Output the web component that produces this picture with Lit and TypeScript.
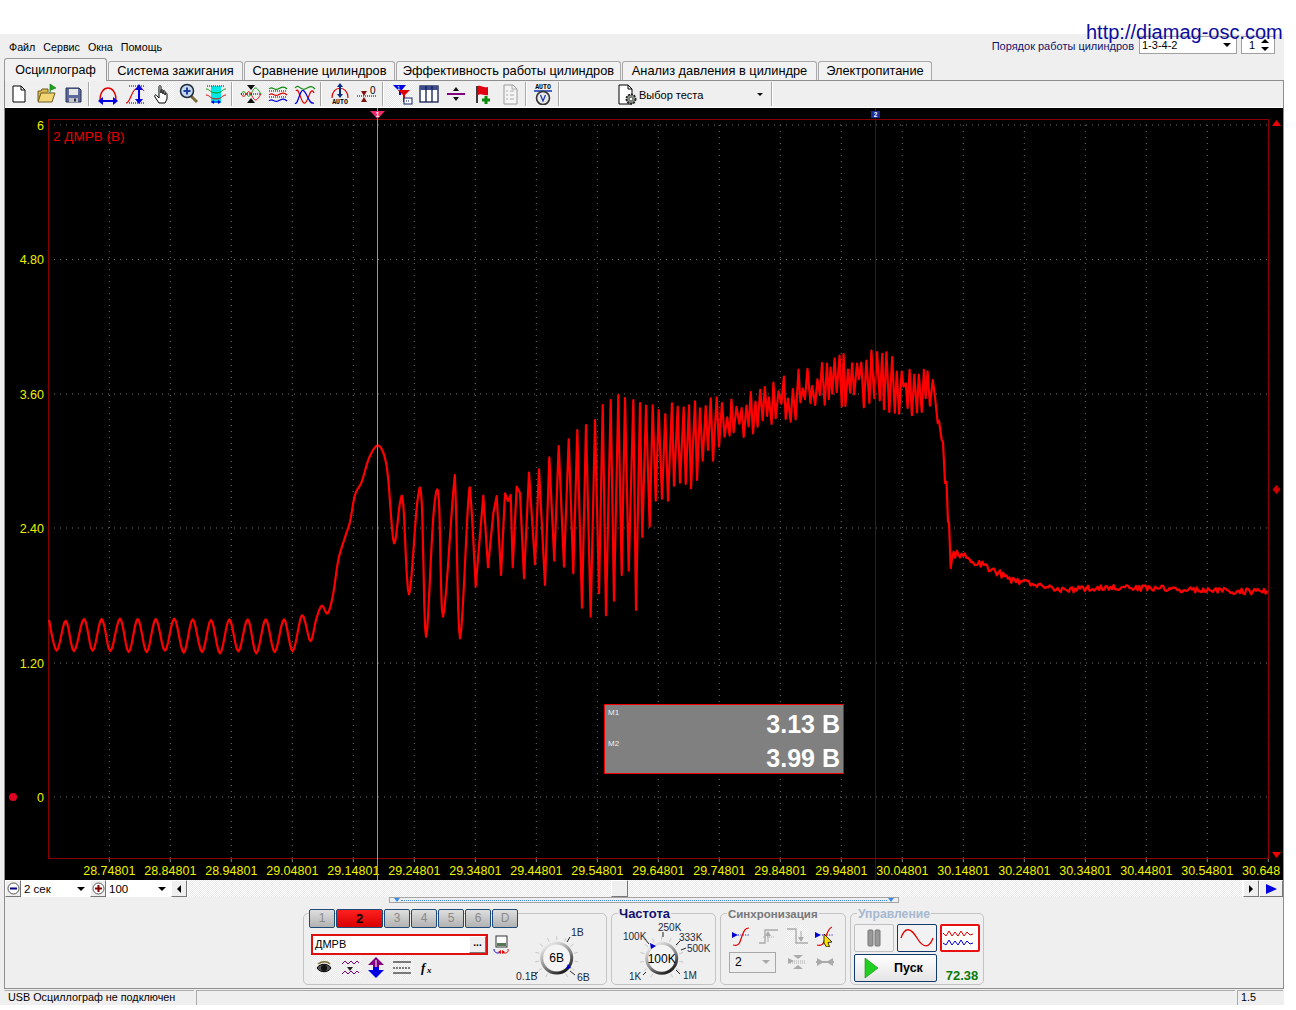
import { LitElement, html, svg, css } from "lit";
import { customElement } from "lit/decorators.js";

// --- waveform data, in page pixels ---
const idle = [[49,620],[56.7,650.7],[65.7,620.7],[74,651],[84,619],[92.7,650.7],[101.7,619],[110.3,651],[120,618.7],[128.7,652],[137.7,619],[146.7,652],[155.7,619],[165,650.7],[174.3,618.7],[183.7,652.7],[192.7,619.3],[202,652],[211,620],[220,653.3],[229.3,619.3],[238.3,651.3],[247.7,619.3],[256.3,653.3],[265.7,619.3],[274.7,652],[284,619.3],[292.7,651.3],[302,615.3],[310.3,641],[316,620],[321.7,605.7],[327.7,613.3]];
const riseSmooth = [[333.3,593.3],[338.3,560],[345,537.3],[350,521.7],[355,495],[361.7,481.7],[368.3,460],[375,447.3],[380,446.7],[385,458.3],[388.3,480],[394,543.3],[400,502.7],[403.3,505],[409,594.3],[417.3,501.7],[421.7,501.7],[426,636.7],[433.3,516.7],[438.7,496.7],[443,616.7],[453.3,491.7],[455.5,492.5],[460,638.3],[468.3,500.7],[471,501.7],[475.7,586.7]];
const rise = [[483.3,495.7],[488,567.3],[493.3,513.3],[496.7,496],[501,575],[505,493.3],[508,501],[510.7,495],[512.7,567.3],[516.7,486.7],[520,493],[524,578.3],[529,472.7],[535,564.3],[539,469.3],[545,585],[549.3,457.3],[554.3,560.7],[558.7,446],[564,566.7],[568.7,439.3],[573.3,573.3],[577.3,430],[582,607.7],[586,425],[590.7,616.7],[595,420],[599,593.3],[602.7,405],[606,615.3],[610.7,400],[614,600.7],[618.3,395],[621.7,575],[625,398],[628.7,570.7],[633.3,400],[636,610],[640,403],[642.3,537],[646,405.7],[649.7,526.7],[652.7,405.3],[655.7,500.7],[658.7,410],[662,498.7],[665.3,414],[668,500.7],[672,403.3],[674,485.7],[677.7,406.7],[680,482.7],[683.7,407.3],[685.7,484],[689,405.3],[691,488.3],[695,401.3],[697,480],[700,408.3],[702.7,460.7],[705.7,406],[708,450],[710.7,398.3],[713,460.7],[716.7,397.3],[719,446.7]];
const fall = [[935,397],[937.7,423],[939,421],[941.7,440],[943,442],[945,483],[946.5,482],[948,522],[949,522],[950.7,568]];
const upperEnv = [[720,404],[760,386],[800,369],[840,354],[870,349],[900,355],[933,374]];
const lowerEnv = [[720,448],[760,432],[790,424],[820,408],[850,406],[880,410],[910,416],[933,408]];
const tailBase = [[952,555],[960,554],[975,562],[990,568],[1010,580],[1030,583],[1060,590],[1100,588],[1150,588],[1200,590],[1268,592]];

function lerp(tbl: number[][], x: number) {
  for (let i = 1; i < tbl.length; i++) {
    if (x <= tbl[i][0]) {
      const t = (x - tbl[i - 1][0]) / (tbl[i][0] - tbl[i - 1][0]);
      return tbl[i - 1][1] + t * (tbl[i][1] - tbl[i - 1][1]);
    }
  }
  return tbl[tbl.length - 1][1];
}

// catmull-rom, so the slow part of the signal comes out round and not as a zigzag
function smooth(src: number[][]) {
  const out: number[][] = [];
  for (let i = 0; i < src.length - 1; i++) {
    const a = src[Math.max(i - 1, 0)], b = src[i], c = src[i + 1], d = src[Math.min(i + 2, src.length - 1)];
    for (let s = 0; s < 6; s++) {
      const t = s / 6, t2 = t * t, t3 = t2 * t;
      out.push([0, 1].map((k) =>
        0.5 * (2 * b[k] + (c[k] - a[k]) * t + (2 * a[k] - 5 * b[k] + 4 * c[k] - d[k]) * t2 + (3 * b[k] - a[k] - 3 * c[k] + d[k]) * t3)));
    }
  }
  out.push(src[src.length - 1]);
  return out;
}

function buildTrace() {
  let seed = 4711;
  const rnd = () => {
    seed = (seed * 16807) % 2147483647;
    return seed / 2147483647;
  };
  const pts = [...smooth([...idle, ...riseSmooth]), ...rise];
  let up = true;
  for (let x = 722; x < 934; x += 1.7 + rnd() * 1.3) {
    const hi = lerp(upperEnv, x);
    const lo = lerp(lowerEnv, x);
    const mid = (hi + lo) / 2;
    const f = rnd();
    pts.push([x, up ? hi + f * f * (mid - hi) : lo - f * f * (lo - mid)]);
    up = !up;
  }
  pts.push(...fall);
  for (let x = 952; x <= 1268; x += 1.6) {
    const amp = x < 1010 ? 4 : 3;
    pts.push([x, lerp(tailBase, x) + (rnd() - 0.5) * amp * 2]);
  }
  return pts.map((p) => p[0].toFixed(1) + "," + p[1].toFixed(1)).join(" ");
}

const trace = buildTrace();
const yAxis = [["6", 125], ["4.80", 259.5], ["3.60", 394], ["2.40", 528], ["1.20", 663], ["0", 797]] as [string, number][];
const xAxis = Array.from({ length: 20 }, (_, i) => ({ x: 109.3 + 61 * i, t: (28.74801 + i * 0.1).toFixed(5) }));

// --- icons ---
const ic = (body: unknown, w = 22, h = 22) =>
  html`<svg width=${w} height=${h} viewBox="0 0 ${w} ${h}" fill="none">${body}</svg>`;

const toolIcons = {
  doc: svg`<path d="M5 3h8l4 4v12H5z" fill="#fff" stroke="#000"/><path d="M13 3v4h4" stroke="#000"/>`,
  open: svg`<path d="M3 18V8h3l1-2h6v3" fill="#d8b850" stroke="#6b5a20"/><path d="M3 19l3-9h14l-3 9z" fill="#f2d676" stroke="#6b5a20"/><path d="M15 10V1l6 4-5 2" fill="#1fa31f" stroke="#0c6d0c" stroke-width=".6"/>`,
  save: svg`<path d="M4 5h13l2 2v12H4z" fill="#5c6b9c" stroke="#2b3050"/><rect x="7" y="6" width="9" height="6" fill="#e8e8e8"/><rect x="7" y="15" width="9" height="4" fill="#c4c4c4"/><rect x="12" y="15.500" width="2" height="3" fill="#2b3050"/>`,
  archW: svg`<path d="M3 17C3 1 19 1 19 17" stroke="#e00000" stroke-width="1.300"/><path d="M4 18h14" stroke="#0000e0" stroke-width="2"/><path d="M1 18l5-4v8zM21 18l-5-4v8z" fill="#0000e0"/>`,
  archH: svg`<path d="M2 20c5 0 5-15 12-15" stroke="#e00000" stroke-width="1.200"/><path d="M14 5c3 0 5 1 6 3" stroke="#e00000"/><path d="M5 3h16M5 20h16" stroke="#000" stroke-dasharray="1 1"/><path d="M15 6v12" stroke="#0000e0" stroke-width="2"/><path d="M15 1l-4 6h8zM15 21l-4-5h8z" fill="#0000e0"/>`,
  hand: svg`<path d="M8 20l-4-6c-1-2 1-3 2-1l2 2V4c0-2 2-2 2 0v6-2c0-2 2-2 2 0v3-2c0-2 2-2 2 0v3-1c0-2 2-1 2 0v5l-2 4z" fill="#fff" stroke="#000"/>`,
  zoom: svg`<path d="M13 13l6 6" stroke="#7d6a3a" stroke-width="3"/><circle cx="9" cy="8" r="6.500" fill="#c5d8ee" stroke="#1e2a3a" stroke-width="1.500"/><path d="M5.500 8h7M9 4.500v7" stroke="#1c3d9c" stroke-width="2"/>`,
  band: svg`<rect x="6" y="3" width="10" height="17" fill="#00e8e8"/><path d="M2 3h18" stroke="#000" stroke-dasharray="1 1"/><path d="M1 6c4 0 4 4 10 4s6-4 10-4" stroke="#0a9a0a"/><path d="M1 12c4 0 4 4 10 4s6-4 10-4" stroke="#e00000"/><path d="M7 19h8" stroke="#0000e0"/><path d="M6 19l3-2v4zM16 19l-3-2v4z" fill="#0000e0"/>`,
  cross: svg`<path d="M1 11c5-8 6 8 10 0s5-8 10 0" stroke="#0a9a0a"/><path d="M1 11c5 8 6-8 10 0s5 8 10 0" stroke="#e00000"/><path d="M11 7l-4-5h8zM11 15l-4 5h8z" fill="#111"/><path d="M1 11h20" stroke="#000" stroke-dasharray="1 1"/>`,
  rows: svg`<path d="M2 6c3-4 5 2 9 0s6-3 9 0" stroke="#0a8a0a" stroke-width="1.200"/><path d="M2 12c3-4 5 2 9 0s6-3 9 0" stroke="#e00000" stroke-width="1.200"/><path d="M2 18c3-4 5 2 9 0s6-3 9 0" stroke="#0000e0" stroke-width="1.200"/><path d="M2 8h18M2 14h18" stroke="#000" stroke-dasharray="1 1"/>`,
  over: svg`<path d="M1 5c4-5 5 3 10 1s6-4 10 0" stroke="#0a8a0a" stroke-width="1.200"/><path d="M2 8c3-5 5 14 9 12s5-18 9-10" stroke="#e00000" stroke-width="1.200"/><path d="M1 20c3 3 5-16 9-12s5 14 10 12" stroke="#0000e0" stroke-width="1.200"/>`,
  autoH: svg`<path d="M3 15C3 2 19 2 19 15" stroke="#e00000" stroke-width="1.200"/><path d="M11 3v10" stroke="#0a2a8a" stroke-width="2"/><path d="M11 0l-3 4h6zM11 15l-3-4h6z" fill="#0a2a8a"/><text x="11" y="21" text-anchor="middle" font-size="6.500" font-weight="700" font-family="Liberation Mono, monospace" fill="#000">AUTO</text>`,
  zero: svg`<path d="M5 8h6l-3 5zM5 19h6l-3-5z" fill="#7d1010"/><path d="M1 13h20" stroke="#000" stroke-dasharray="1 1"/><text x="14" y="11" font-size="10" font-family="Liberation Sans, sans-serif" fill="#000">0</text>`,
  filter: svg`<path d="M2 2h13l-5 6v4H8V8z" fill="#0000e0"/><path d="M7 7h12l-5 5v7h-2v-7z" fill="#e00000"/><text x="6" y="7" font-size="6" fill="#fff" font-family="Liberation Sans, sans-serif">1</text><rect x="13" y="15" width="8" height="6" fill="#fff" stroke="#12206a"/><path d="M15 18h4" stroke="#12206a" stroke-dasharray="1 1"/>`,
  table: svg`<rect x="2" y="3" width="18" height="16" fill="#fff" stroke="#101c50" stroke-width="1.300"/><rect x="2" y="3" width="18" height="4" fill="#3c4c90"/><path d="M8 3v16M14 3v16" stroke="#101c50" stroke-width="1.300"/>`,
  split: svg`<path d="M2 11h18" stroke="#800080" stroke-width="2"/><path d="M11 4l-3 4h6zM11 18l-3-4h6z" fill="#111"/>`,
  flag: svg`<path d="M5 3v17" stroke="#000" stroke-width="1.500"/><path d="M6 3c3-1 5 2 10 1v8c-4 1-7-2-10 0z" fill="#e00010"/><path d="M14 13v8M10 17h8" stroke="#0a8a0a" stroke-width="3"/>`,
  check: svg`<path d="M5 2h9l4 4v15H5z" fill="#f4f4f4" stroke="#999"/><path d="M13 2v4h5M7 8h2M7 12h2M7 16h2M11 8h4M11 12h4M11 16h4" stroke="#aaa"/>`,
  gauge: svg`<text x="11" y="6" text-anchor="middle" font-size="6.500" font-weight="700" font-family="Liberation Mono, monospace" fill="#000">AUTO</text><path d="M2 8h18" stroke="#1030b0" stroke-width="1.500"/><circle cx="11" cy="15" r="6.500" fill="#e8e8e8" stroke="#333" stroke-width="1.600"/><path d="M8.500 12l2.500 6 2.500-6" stroke="#1030b0" stroke-width="1.200"/>`,
  test: svg`<path d="M3 2h9l4 4v15H3z" fill="#fff" stroke="#000"/><path d="M12 2v4h4" stroke="#000"/><circle cx="15" cy="16" r="4.600" fill="#8a9488" stroke="#222" stroke-width="1.800" stroke-dasharray="2 1"/><circle cx="15" cy="16" r="1.800" fill="#fff" stroke="#333" stroke-width=".6"/>`,
};

const syncUp = svg`<path d="M1 18h6V5h13" stroke="#aaa" stroke-width="1.400"/><path d="M10 8v9" stroke="#aaa"/><path d="M10 6l-3 5h6z" fill="#aaa"/><path d="M5 12h11" stroke="#aaa" stroke-dasharray="1 1"/>`;
const syncDown = svg`<path d="M1 4h9v14h12" stroke="#aaa" stroke-width="1.400"/><path d="M15 6v8" stroke="#aaa"/><path d="M15 17l-3-5h6z" fill="#aaa"/>`;
const syncRise = svg`<path d="M2 7l6 3-6 3z" fill="#0000d0"/><path d="M8 10h12" stroke="#0000d0" stroke-dasharray="1 1.400"/><path d="M3 20c7 2 7-4 9-9s3-8 7-8" stroke="#e00000" stroke-width="1.200"/>`;
const syncCursor = svg`<path d="M1 7l6 3-6 3z" fill="#0000d0"/><path d="M8 10h12" stroke="#0000d0" stroke-dasharray="1 1.400"/><path d="M3 20c7 2 7-4 9-9s3-8 6-9" stroke="#e00000" stroke-width="1.200"/><path d="M10 9l8 8-4 .5 1.500 4-3 .5-2.500-4z" fill="#ffe000" stroke="#000" stroke-width=".8"/>`;
const syncA = svg`<path d="M2 7l6 3-6 3z" fill="#aaa"/><path d="M7 4h10l-5 4zM7 18h10l-5-4z" fill="#aaa"/><path d="M4 10h16M4 12h16" stroke="#aaa" stroke-dasharray="1 1"/>`;
const syncB = svg`<path d="M2 11h18" stroke="#aaa" stroke-width="2"/><path d="M3 7l7 4-7 4zM19 7l-7 4 7 4z" fill="#aaa"/>`;

function ticks(cx: number, cy: number, from: number, to: number, n: number, r1: number, r2: number) {
  return Array.from({ length: n }, (_, i) => {
    const a = ((from + ((to - from) * i) / (n - 1)) * Math.PI) / 180;
    return svg`<line x1=${cx + r1 * Math.cos(a)} y1=${cy + r1 * Math.sin(a)} x2=${cx + r2 * Math.cos(a)} y2=${cy + r2 * Math.sin(a)} stroke="#c8c8c8"/>`;
  });
}

const knobRing = (id: string, cx: number, cy: number) => svg`
  <defs><linearGradient id=${id} x1="0.2" y1="0" x2="0.8" y2="1"><stop offset="0" stop-color="#f0f0f0"/><stop offset="0.55" stop-color="#888"/><stop offset="1" stop-color="#111"/></linearGradient></defs>
  <circle cx=${cx} cy=${cy} r="15" fill="#f4f4f4" stroke="url(#${id})" stroke-width="3"/>`;

const blackTick = (x1: number, y1: number, x2: number, y2: number) => svg`<line x1=${x1} y1=${y1} x2=${x2} y2=${y2} stroke="#222"/>`;

const tabs = ["Осциллограф", "Система зажигания", "Сравнение цилиндров", "Эффективность работы цилиндров", "Анализ давления в цилиндре", "Электропитание"];
const channels = ["1", "2", "3", "4", "5", "6", "D"];

@customElement("app-root")
export class AppRoot extends LitElement {
  static styles = css`
    :host { display: block; position: relative; width: 1296px; height: 1010px; background: #fff; overflow: hidden; font-family: "Liberation Sans", Arial, sans-serif; color: #000; }
    svg { display: block; }
    .link { position: absolute; left: 1086px; top: 20px; font-size: 20px; line-height: 24px; color: #0b0b9c; white-space: nowrap; z-index: 3; }
    .win { position: absolute; left: 0; top: 34px; width: 1284px; height: 971px; background: #efefef; display: flex; flex-direction: column; }
    .menu { height: 24px; display: flex; align-items: center; padding: 2px 0 0 9px; box-sizing: border-box; font-size: 10.7px; gap: 8px; position: relative; }
    .order { margin-left: auto; margin-right: 9px; display: flex; align-items: center; gap: 4px; height: 24px; margin-top: -4px; }
    .order span { color: #13136a; font-size: 11px; margin: 2px 1px 0 0; }
    .mini { height: 18px; box-sizing: border-box; border: 1px solid #a0a0a0; background: #fff; font-size: 11px; line-height: 14px; padding-left: 2px; position: relative; display: flex; justify-content: space-between; align-items: center; padding-right: 5px; }
    .order-sel { width: 98px; }
    .order-spin { width: 34px; padding-left: 7px; }
    .caret { width: 0; height: 0; border: 4px solid transparent; border-top: 4px solid #000; border-bottom: 0; }
    .spin { display: flex; flex-direction: column; gap: 4px; }
    .spin i { display: block; width: 0; height: 0; border: 4px solid transparent; border-bottom: 4px solid #000; border-top: 0; }
    .spin i + i { border-top: 4px solid #000; border-bottom: 0; }
    .tabs { height: 22px; display: grid; grid-template-columns: 103px 135px 151px 225px 195px 114px; column-gap: 1px; margin-left: 4px; align-items: end; position: relative; z-index: 1; }
    .tab { height: 19px; box-sizing: border-box; border: 1px solid #a8a8a8; border-bottom: 0; border-radius: 3px 3px 0 0; background: #f2f2f2; font-size: 12.8px; line-height: 17px; text-align: center; white-space: nowrap; }
    .tab.on { height: 23px; border-color: #999; font-size: 12.5px; line-height: 22px; margin-bottom: -1px; background: #f2f2f2; }
    .panel { width: 1280px; box-sizing: border-box; height: 909px; margin-left: 4px; border: 1px solid #8e8e8e; display: flex; flex-direction: column; }
    .toolbar { height: 26px; display: flex; align-items: center; border-bottom: 1px solid #fff; }
    .tb { width: 27px; height: 25px; display: flex; align-items: center; justify-content: center; flex: none; }
    .on-check { background: repeating-conic-gradient(#e6e6e6 0 25%, #fdfdfd 0 50%) 0 0 / 2px 2px; }
    .sep { width: 2px; height: 24px; margin: 0 4px 0 2px; flex: none; border-left: 1px solid #a8a8a8; border-right: 1px solid #fff; box-sizing: border-box; }
    .sep.tight { margin-right: 2px; }
    .test { width: 205px; display: flex; align-items: center; padding-left: 52px; box-sizing: border-box; font-size: 11px; gap: 1px; height: 24px; flex: none; }
    .test span { margin-top: 2px; }
    .test .caret { margin-left: auto; margin-right: 6px; border-width: 3px; border-top-width: 3px; }
    .chart { height: 772px; background: #000; position: relative; flex: none; }
    .readout { position: absolute; left: 599px; top: 596px; width: 240px; height: 70px; box-sizing: border-box; border: 1px solid #f00000; background: #808080; color: #fff; display: grid; grid-template-columns: 1fr auto; grid-template-rows: 34px 34px; padding: 2px 3px 0 0; font-weight: 700; }
    .readout small { font-size: 8px; font-weight: 400; padding-left: 3px; line-height: 11px; color: #e8f0f8; }
    .readout small.m2 { margin-top: -3px; }
    .readout b { font-size: 25px; line-height: 34px; white-space: nowrap; }
    .timerow { height: 17px; display: flex; align-items: stretch; background: #fff; flex: none; font-size: 11.5px; }
    .rbtn { width: 16px; box-sizing: border-box; border: 1px solid; border-color: #fff #777 #777 #fff; background: #efefef; display: flex; align-items: center; justify-content: center; flex: none; }
    .tsel { display: flex; align-items: center; justify-content: space-between; padding: 0 5px 0 3px; box-sizing: border-box; flex: none; }
    .track { flex: 1; position: relative; background: repeating-conic-gradient(#e9e9e9 0 25%, #fff 0 50%) 0 0 / 2px 2px; margin: 0 1px; }
    .thumb { position: absolute; left: 423px; top: 0; width: 17px; height: 17px; box-sizing: border-box; border: 1px solid; border-color: #fff #777 #777 #fff; background: #efefef; }
    .arrow-l { width: 0; height: 0; border: 4px solid transparent; border-right: 4px solid #000; border-left: 0; }
    .arrow-r { width: 0; height: 0; border: 4px solid transparent; border-left: 4px solid #000; border-right: 0; }
    .arrow-b { width: 0; height: 0; border: 5px solid transparent; border-left: 11px solid #0000e0; border-right: 0; }
    .range { height: 6px; width: 510px; margin-left: 384px; box-sizing: border-box; border: 1px solid #a4a4a4; border-top-width: 1px; display: flex; align-items: center; padding: 0 4px; gap: 1px; flex: none; }
    .range i { flex: 1; border-top: 1px dotted #3b8be8; }
    .range u { width: 0; height: 0; border: 3px solid transparent; border-top: 4px solid #3b8be8; border-bottom: 0; }
    .groups { display: flex; gap: 4px; margin: 10px 0 0 298px; height: 72px; flex: none; }
    .grp { box-sizing: border-box; height: 72px; border: 1px solid #c4c4c4; border-radius: 5px; position: relative; flex: none; }
    .title { position: absolute; top: -6px; left: 6px; background: #efefef; font-size: 11.5px; font-weight: 700; line-height: 12px; padding: 0 1px; z-index: 1; white-space: nowrap; }
    .g1 { width: 304px; display: flex; }
    .g1col { width: 203px; margin-left: 5px; flex: none; }
    .chs { display: flex; gap: 1px; margin-top: -5px; height: 19px; }
    .ch { width: 26px; flex: none; box-sizing: border-box; border: 1px solid #1d4a78; border-radius: 2px; background: linear-gradient(#dedede, #b2b2b2); color: #8a8a8a; font-size: 12px; line-height: 17px; text-align: center; }
    .ch.on { width: 47px; background: linear-gradient(#ff2020, #d80000); color: #000; font-weight: 700; font-size: 13px; }
    .field { margin: 6px 0 0 2px; display: flex; align-items: center; gap: 4px; }
    .input { width: 177px; height: 21px; flex: none; box-sizing: border-box; border: 2px solid #e01010; background: #fff; font-size: 11px; line-height: 17px; padding-left: 2px; display: flex; justify-content: space-between; }
    .dots { width: 17px; height: 17px; box-sizing: border-box; border: 1px solid; border-color: #fff #777 #777 #fff; background: #efefef; font-size: 10px; font-weight: 700; line-height: 11px; text-align: center; }
    .tools { display: flex; margin: 1px 0 0 3px; height: 23px; align-items: center; gap: 2px; }
    .t { width: 24px; height: 23px; display: flex; align-items: center; justify-content: center; flex: none; }
    .g2 { width: 105px; }
    .g2 .title { font-size: 13px; color: #12126e; }
    .g3 { width: 126px; }
    .g3 .title { color: #777; left: 6px; }
    .synch { display: grid; grid-template-columns: 28px 28px 28px 28px; grid-auto-rows: 26px; align-items: center; justify-items: center; margin: 9px 0 0 6px; }
    .ssel { grid-column: span 2; justify-self: start; margin-left: 2px; width: 47px; height: 21px; box-sizing: border-box; border: 1px solid #a8a8a8; display: flex; justify-content: space-between; align-items: center; font-size: 12px; padding: 0 5px; }
    .ssel .caret { border-top-color: #aaa; }
    .g4 { width: 134px; display: grid; grid-template-columns: 40px 40px 40px; grid-template-rows: 28px 28px; column-gap: 3px; row-gap: 2px; padding: 10px 0 0 3px; }
    .g4 .title { color: #a6b8d0; font-size: 12.2px; }
    .cbtn { box-sizing: border-box; border: 1px solid #123a6a; border-radius: 2px; background: #f2f2f2; display: flex; align-items: center; justify-content: center; }
    .cbtn.off { border-color: #c0c0c0; }
    .cbtn.red { border: 2px solid #e81010; background: #fff; }
    .go { grid-column: span 2; display: flex; align-items: center; padding-left: 9px; gap: 15px; font-size: 12.5px; font-weight: 700; justify-content: flex-start; background: linear-gradient(#fff, #e4e4e4); }
    .rate { align-self: end; text-align: center; font-size: 13px; font-weight: 700; color: #0a7a0a; padding-left: 4px; margin-bottom: -2px; line-height: 16px; }
    .status { height: 15px; margin-top: 1px; display: grid; grid-template-columns: 190px 1039px 46px; column-gap: 2px; margin-left: 4px; font-size: 10.8px; flex: none; }
    .status div { border-left: 1px solid #aaa; border-top: 1px solid #aaa; padding-left: 3px; box-sizing: border-box; line-height: 13px; }
    .status div:first-child { border-left-color: #efefef; }
  `;

  chart() {
    return html`<svg width="1278" height="772" viewBox="5 108 1278 772" font-family="Liberation Sans, Arial, sans-serif">
      ${yAxis.map(([, y]) => svg`<line x1="48" x2="1268" y1=${y} y2=${y} stroke="#707070" stroke-dasharray="1 5"/>`)}
      ${xAxis.map((t) => svg`<line x1=${t.x} x2=${t.x} y1="119" y2="858" stroke="#707070" stroke-dasharray="1 5"/>
        <line x1=${t.x} x2=${t.x} y1="858" y2="862" stroke="#888"/>`)}
      <rect x="48.500" y="119.500" width="1220" height="739" stroke="#8a0000" fill="none"/>
      ${yAxis.map(([l, y]) => svg`<text x="44" y=${y + 4.5} text-anchor="end" font-size="12.500" fill="#ecf000">${l}</text>`)}
      ${xAxis.slice(0, 19).map((t) => svg`<text x=${t.x} y="875" text-anchor="middle" font-size="12.500" fill="#f0f400">${t.t}</text>`)}
      <text x="1242" y="875" font-size="12.500" fill="#f0f400">30.648</text>
      <text x="53" y="141" font-size="13.500" fill="#e80000">2 ДМРВ (В)</text>
      <line x1="875.500" x2="875.500" y1="108" y2="880" stroke="#1a1a60"/>
      <polyline points=${trace} fill="none" stroke="#ff0000" stroke-width="2.200" stroke-linejoin="round"/>
      <line x1="875.500" x2="875.500" y1="350" y2="410" stroke="#1010e0"/>
      <line x1="377.500" x2="377.500" y1="108" y2="880" stroke="#b08a98"/>
      <path d="M370 111h15l-7.500 8z" fill="#f02a6a"/>
      <text x="377.500" y="117" text-anchor="middle" font-size="6.500" font-weight="700" fill="#fff">1</text>
      <rect x="871" y="111" width="9" height="7" fill="#1a2a9a"/>
      <text x="875.500" y="117" text-anchor="middle" font-size="6.500" font-weight="700" fill="#fff">2</text>
      <path d="M1272 126l4.500-6 4.500 6z" fill="#f00000"/>
      <path d="M1276.500 485l4 4.500-4 4.500-4-4.500z" fill="#d00000"/>
      <path d="M1272 852l4.500 6 4.500-6z" fill="#f00000"/>
      <circle cx="13" cy="797" r="4" fill="#e00020"/>
    </svg>`;
  }

  knobV() {
    return html`<svg width="90" height="70" viewBox="513 914 90 70" font-family="Liberation Sans, Arial, sans-serif" font-size="10.500" fill="#1c2a40">
      ${ticks(557.7, 958, 120, 420, 13, 18, 22)}
      ${blackTick(568, 942, 571, 937)}${blackTick(536, 974, 539, 972)}${blackTick(571, 971, 576, 975)}
      ${knobRing("kv", 557.7, 958)}
      <text x="557.700" y="962" text-anchor="middle" font-size="12" fill="#000">6В</text>
      <text x="572" y="936">1В</text><text x="517" y="980">0.1В</text><text x="578" y="981">6В</text>
      <path d="M567 969l2-5 3 4z" fill="#0000d0"/>
    </svg>`;
  }

  knobF() {
    return html`<svg width="103" height="70" viewBox="612 914 103 70" font-family="Liberation Sans, Arial, sans-serif" font-size="10" fill="#1c2a40">
      ${ticks(661.7, 958.3, 120, 420, 13, 18, 22)}
      ${blackTick(645, 939, 649, 944)}${blackTick(663, 932, 663, 937)}${blackTick(680, 941, 676, 945)}${blackTick(681, 950, 686, 948)}${blackTick(646, 972, 643, 975)}${blackTick(676, 970, 680, 974)}
      ${knobRing("kf", 661.7, 958.3)}
      <text x="661.700" y="963" text-anchor="middle" font-size="12" fill="#000">100K</text>
      <text x="658" y="931">250K</text><text x="623" y="940">100K</text><text x="679" y="941">333K</text><text x="687" y="952">500K</text><text x="629" y="980">1K</text><text x="683" y="979">1M</text>
      <path d="M650 943l6 3-5 3z" fill="#0000d0"/>
    </svg>`;
  }

  render() {
    const tb = (k: keyof typeof toolIcons, on = false) =>
      html`<div class="tb ${on ? "on-check" : ""}">${ic(toolIcons[k])}</div>`;
    return html`
      <div class="link">http://diamag-osc.com</div>
      <div class="win">
        <div class="menu">
          <span>Файл</span><span>Сервис</span><span>Окна</span><span>Помощь</span>
          <div class="order">
            <span>Порядок работы цилиндров</span>
            <div class="mini order-sel">1-3-4-2<i class="caret"></i></div>
            <div class="mini order-spin">1<div class="spin"><i></i><i></i></div></div>
          </div>
        </div>
        <div class="tabs">
          ${tabs.map((t, i) => html`<div class="tab ${i === 0 ? "on" : ""}">${t}</div>`)}
        </div>
        <div class="panel">
          <div class="toolbar">
            ${tb("doc")}${tb("open")}${tb("save")}<div class="sep"></div>
            ${tb("archW")}${tb("archH")}${tb("hand", true)}${tb("zoom")}${tb("band")}<div class="sep"></div>
            ${tb("cross")}${tb("rows", true)}${tb("over")}<div class="sep"></div>
            ${tb("autoH")}${tb("zero")}<div class="sep"></div>
            ${tb("filter", true)}${tb("table")}${tb("split")}${tb("flag")}${tb("check")}<div class="sep tight"></div>
            ${tb("gauge")}<div class="sep"></div>
            <div class="test">${ic(toolIcons.test)}<span>Выбор теста</span><i class="caret"></i></div>
            <div class="sep"></div>
          </div>
          <div class="chart">
            ${this.chart()}
            <div class="readout">
              <small>M1</small><b>3.13 В</b>
              <small class="m2">M2</small><b>3.99 В</b>
            </div>
          </div>
          <div class="timerow">
            <div class="rbtn">${ic(svg`<circle cx="6.500" cy="6.500" r="5.500" stroke="#555" fill="#fff"/><path d="M3 6.500h7" stroke="#000080" stroke-width="2"/>`, 13, 13)}</div>
            <div class="tsel" style="width:69px">2 сек<i class="caret"></i></div>
            <div class="rbtn">${ic(svg`<circle cx="6.500" cy="6.500" r="5.500" stroke="#555" fill="#fff"/><path d="M3 6.500h7M6.500 3v7" stroke="#800000" stroke-width="2"/>`, 13, 13)}</div>
            <div class="tsel" style="width:65px">100<i class="caret"></i></div>
            <div class="rbtn"><i class="arrow-l"></i></div>
            <div class="track"><div class="thumb"></div></div>
            <div class="rbtn"><i class="arrow-r"></i></div>
            <div class="rbtn" style="width:24px"><i class="arrow-b"></i></div>
          </div>
          <div class="range"><u></u><i></i><u></u></div>
          <div class="groups">
            <div class="grp g1">
              <div class="g1col">
                <div class="chs">${channels.map((c, i) => html`<div class="ch ${i === 1 ? "on" : ""}">${c}</div>`)}</div>
                <div class="field">
                  <div class="input">ДМРВ<div class="dots">...</div></div>
                  ${ic(svg`<rect x="4" y="1" width="11" height="11" fill="#fff" stroke="#333"/><rect x="5" y="8" width="9" height="3" fill="#557755"/><path d="M2 14c0 4 4 5 7 3" stroke="#0000c0"/><path d="M16 14c1 4-3 5-6 3" stroke="#e00000"/><path d="M9 15v4l-3-2zM10 15v4l3-2z" fill="#e00000"/>`, 18, 20)}
                </div>
                <div class="tools">
                  <div class="t on-check">${ic(svg`<path d="M3 10c3-5 11-5 14 0-3 5-11 5-14 0z" fill="#555" stroke="#000"/><circle cx="10" cy="10" r="3" fill="#111"/><path d="M4 6c4-3 9-3 12 0" stroke="#776f2a" stroke-width="1.500"/>`, 20, 20)}</div>
                  <div class="t on-check">${ic(svg`<path d="M2 6l3-3 3 3 3-3 3 3 3-3 2 2" stroke="#800080"/><path d="M7 9h6l-3 4z" fill="#222"/><path d="M2 16l3-3 3 3 3-3 3 3 3-3 2 2" stroke="#800080"/>`, 20, 20)}</div>
                  <div class="t">${ic(svg`<path d="M2 9l8-8 8 8h-5v3H7V9z" fill="#800080"/><path d="M2 14l8 8 8-8h-5v-3H7v3z" fill="#0000e0"/><path d="M10 4v7" stroke="#fff"/>`, 20, 23)}</div>
                  <div class="t on-check">${ic(svg`<path d="M1 4h18M1 15h18" stroke="#000"/><path d="M1 10h18" stroke="#000" stroke-dasharray="2 1"/>`, 20, 20)}</div>
                  <div class="t">${ic(svg`<text x="2" y="14" font-size="13" font-style="italic" font-weight="700" font-family="Liberation Serif, serif" fill="#000">f</text><text x="8" y="15" font-size="9" font-style="italic" font-weight="700" font-family="Liberation Serif, serif" fill="#000">x</text>`, 18, 20)}</div>
                </div>
              </div>
              ${this.knobV()}
            </div>
            <div class="grp g2"><div class="title">Частота</div>${this.knobF()}</div>
            <div class="grp g3">
              <div class="title">Синхронизация</div>
              <div class="synch">
                <div>${ic(syncRise)}</div><div>${ic(syncUp)}</div><div class="on-check">${ic(syncDown)}</div><div>${ic(syncCursor)}</div>
                <div class="ssel">2<i class="caret"></i></div><div>${ic(syncA)}</div><div>${ic(syncB)}</div>
              </div>
            </div>
            <div class="grp g4">
              <div class="title">Управление</div>
              <div class="cbtn off">${ic(svg`<rect x="4" y="3" width="5" height="16" rx="1" fill="#999" stroke="#777"/><rect x="11" y="3" width="5" height="16" rx="1" fill="#999" stroke="#777"/>`, 20, 22)}</div>
              <div class="cbtn">${ic(svg`<path d="M2 11C6 -1 12 1 18 11s12 11 16 0" stroke="#e00000" stroke-width="1.300"/>`, 36, 22)}</div>
              <div class="cbtn red">${ic(svg`<path d="M1 7l3 3 3-5 3 5 3-4 3 4 3-5 3 5 3-4 3 3 3-1" stroke="#e00000"/><path d="M1 17l3 2 3-5 3 5 3-4 3 4 3-5 3 5 3-4 3 3 3-1" stroke="#0000d0"/>`, 36, 24)}</div>
              <div class="cbtn go">${ic(svg`<path d="M1 2l13 10L1 22z" fill="#20d020" stroke="#108810" stroke-width=".6"/>`, 15, 24)}<span>Пуск</span></div>
              <div class="rate">72.38</div>
            </div>
          </div>
        </div>
        <div class="status">
          <div>USB Осциллограф не подключен</div><div></div><div>1.5</div>
        </div>
      </div>
    `;
  }
}
